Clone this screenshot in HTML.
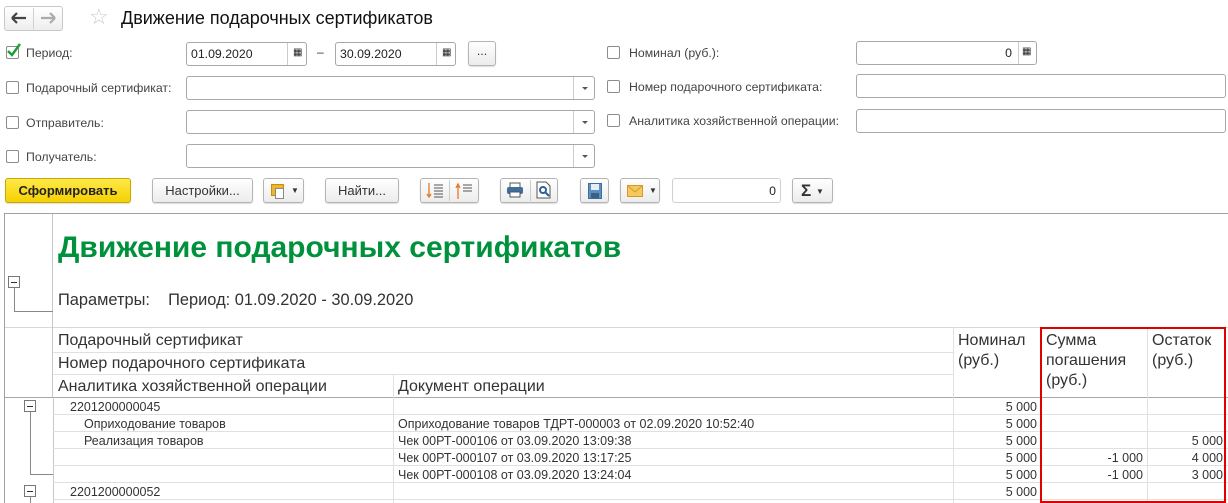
<!DOCTYPE html>
<html><head><meta charset="utf-8"><style>
*{box-sizing:border-box;margin:0;padding:0}
body{width:1228px;height:503px;overflow:hidden;background:#fff;font-family:"Liberation Sans",Arial,sans-serif;color:#333;position:relative}
.a{position:absolute}
.cb{position:absolute;width:13px;height:13px;border:1px solid #8c8c8c;border-radius:2px;background:#fff}
.lbl{position:absolute;font-size:12.3px;color:#444}
.inp{position:absolute;border:1px solid #a8a8a8;border-radius:3px;background:#fff;height:24px;font-size:12.3px;color:#222}
.dd{position:absolute;right:0;top:0;width:21px;height:100%;border-left:1px solid #ccc}
.dd:after{content:"";position:absolute;left:8px;top:10px;border:3px solid transparent;border-top:3px solid #555}
.btn{position:absolute;border:1px solid #b4b4b4;border-radius:3px;background:linear-gradient(#fff,#ececec);height:25px;font-size:12.3px;color:#333;text-align:center;line-height:23px;box-shadow:0 1px 1px #ddd}
.h{position:absolute;font-size:16px;color:#333}
.hl{position:absolute;height:1px;background:#e0e0e0}
.vl{position:absolute;width:1px;background:#e0e0e0}
.d{position:absolute;font-size:12.5px;color:#333}
.r{text-align:right}
.tog{position:absolute;width:12px;height:12px;border:1px solid #777;background:#fff}
.tog:after{content:"";position:absolute;left:2px;top:5px;width:6px;height:1px;background:#333}
</style></head><body>

<!-- nav -->
<div class="a" style="left:4px;top:6px;width:59px;height:25px;border:1px solid #c8c8c8;border-radius:3px;background:linear-gradient(#fff,#eee)"></div>
<div class="a" style="left:33px;top:8px;width:1px;height:21px;background:#d0d0d0"></div>
<svg class="a" style="left:11px;top:12px" width="16" height="12"><path d="M1 6H15M1 6L6 1M1 6L6 11" stroke="#444" stroke-width="2.2" fill="none"/></svg>
<svg class="a" style="left:40px;top:12px" width="16" height="12"><path d="M1 6H15M15 6L10 1M15 6L10 11" stroke="#aaa" stroke-width="2.2" fill="none"/></svg>
<div class="a" style="left:89px;top:4px;font-size:22px;color:#ccc">☆</div>
<div class="a" style="left:121px;top:8px;font-size:18px;color:#111">Движение подарочных сертификатов</div>

<!-- row1 -->
<div class="cb" style="left:6px;top:46px"></div>
<svg class="a" style="left:6px;top:42px" width="16" height="16"><path d="M2 9L6 13L14 2" stroke="#1e9e3c" stroke-width="2.5" fill="none"/></svg>
<div class="lbl" style="left:26px;top:46px">Период:</div>
<div class="inp" style="left:186px;top:42px;width:121px"><span class="a" style="left:4px;top:4px">01.09.2020</span><div class="a" style="left:100px;top:0;width:1px;height:22px;background:#ccc"></div><span class="a" style="left:106px;top:4px;font-size:10px">▦</span></div>
<div class="a" style="left:317px;top:45px;font-size:12px">–</div>
<div class="inp" style="left:335px;top:42px;width:121px"><span class="a" style="left:4px;top:4px">30.09.2020</span><div class="a" style="left:100px;top:0;width:1px;height:22px;background:#ccc"></div><span class="a" style="left:106px;top:4px;font-size:10px">▦</span></div>
<div class="btn" style="left:468px;top:41px;width:28px;line-height:18px">...</div>

<div class="cb" style="left:607px;top:46px"></div>
<div class="lbl" style="left:629px;top:46px">Номинал (руб.):</div>
<div class="inp" style="left:856px;top:41px;width:181px"><span class="a" style="right:24px;top:4px">0</span><div class="a" style="left:161px;top:0;width:1px;height:22px;background:#ccc"></div><span class="a" style="left:165px;top:4px;font-size:10px">▦</span></div>

<!-- row2 -->
<div class="cb" style="left:6px;top:81px"></div>
<div class="lbl" style="left:26px;top:81px">Подарочный сертификат:</div>
<div class="inp" style="left:186px;top:76px;width:409px"><div class="dd"></div></div>
<div class="cb" style="left:607px;top:80px"></div>
<div class="lbl" style="left:629px;top:80px">Номер подарочного сертификата:</div>
<div class="inp" style="left:856px;top:74px;width:370px"></div>

<!-- row3 -->
<div class="cb" style="left:6px;top:116px"></div>
<div class="lbl" style="left:26px;top:116px">Отправитель:</div>
<div class="inp" style="left:186px;top:110px;width:409px"><div class="dd"></div></div>
<div class="cb" style="left:607px;top:114px"></div>
<div class="lbl" style="left:629px;top:114px">Аналитика хозяйственной операции:</div>
<div class="inp" style="left:856px;top:109px;width:370px"></div>

<!-- row4 -->
<div class="cb" style="left:6px;top:150px"></div>
<div class="lbl" style="left:26px;top:150px">Получатель:</div>
<div class="inp" style="left:186px;top:144px;width:409px"><div class="dd"></div></div>

<!-- toolbar -->
<div class="btn" style="left:5px;top:178px;width:126px;background:linear-gradient(#ffe94a,#f5d000);border-color:#c9a900;font-weight:bold;color:#222;font-size:13px">Сформировать</div>
<div class="btn" style="left:152px;top:178px;width:101px;font-size:13px">Настройки...</div>
<div class="btn" style="left:263px;top:178px;width:41px"><span class="a" style="left:7px;top:5px;width:13px;height:12px;background:#e8b830;border:1px solid #c89000"></span><span class="a" style="left:11px;top:9px;width:9px;height:11px;background:#fff;border:1px solid #888"></span><span class="a" style="left:27px;top:0;font-size:8px">▼</span></div>
<div class="btn" style="left:325px;top:178px;width:74px;font-size:13px">Найти...</div>
<div class="btn" style="left:420px;top:178px;width:59px"></div>
<div class="a" style="left:449px;top:180px;width:1px;height:21px;background:#ccc"></div>
<svg class="a" style="left:426px;top:182px" width="20" height="18"><path d="M3 1V15M1 12L3 15L5 12" stroke="#e87722" stroke-width="1.3" fill="none"/><path d="M8 3H17M8 6H17M8 9H17M8 12H17M8 15H17" stroke="#555" stroke-width="1"/></svg>
<svg class="a" style="left:455px;top:182px" width="20" height="18"><path d="M3 17V3M1 6L3 2L5 6" stroke="#e87722" stroke-width="1.3" fill="none"/><path d="M8 3H17M8 6H17M8 9H17" stroke="#555" stroke-width="1"/></svg>
<div class="btn" style="left:500px;top:178px;width:58px"></div>
<div class="a" style="left:530px;top:180px;width:1px;height:21px;background:#ccc"></div>
<svg class="a" style="left:506px;top:182px" width="18" height="16"><rect x="4" y="1" width="10" height="5" fill="#fff" stroke="#555"/><rect x="1" y="5" width="16" height="7" rx="2" fill="#3d6f9e"/><rect x="4" y="10" width="10" height="5" fill="#fff" stroke="#555"/></svg>
<svg class="a" style="left:536px;top:181px" width="16" height="18"><path d="M1 1H10L14 5V17H1Z" fill="#fff" stroke="#555"/><circle cx="7" cy="9" r="3" fill="none" stroke="#2b5f9e" stroke-width="2"/><path d="M9 11L13 15" stroke="#2b5f9e" stroke-width="2"/></svg>
<div class="btn" style="left:580px;top:178px;width:29px"><svg class="a" style="left:7px;top:4px" width="14" height="16"><rect x="0.5" y="0.5" width="13" height="15" fill="#5d8fc0" stroke="#3d6f9e"/><rect x="3" y="1" width="8" height="6" fill="#e8eef5"/><rect x="3" y="10" width="8" height="5" fill="#3d6080"/></svg></div>
<div class="btn" style="left:620px;top:178px;width:40px"><svg class="a" style="left:6px;top:6px" width="16" height="12"><rect x="0.5" y="0.5" width="15" height="11" fill="#f5c860" stroke="#d49b20"/><path d="M1 1L8 7L15 1" stroke="#d49b20" fill="none"/></svg><span class="a" style="left:28px;top:0;font-size:8px">▼</span></div>
<div class="inp" style="left:672px;top:178px;width:109px;border-color:#d0d0d0;height:25px"><span class="a" style="right:4px;top:5px">0</span></div>
<div class="btn" style="left:792px;top:178px;width:41px;font-size:17px;font-weight:bold;text-align:left;padding-left:8px">Σ <span style="font-size:8px;font-weight:normal;vertical-align:middle">▼</span></div>

<!-- report frame -->
<div class="a" style="left:4px;top:213px;width:1224px;height:290px;border:1px solid #a0a0a0;border-right:none;border-bottom:none"></div>
<div class="vl" style="left:52px;top:214px;height:113px;background:#c8c8c8"></div>
<div class="tog" style="left:8px;top:276px"></div>
<div class="a" style="left:14px;top:288px;width:1px;height:23px;background:#888"></div>
<div class="a" style="left:14px;top:311px;width:39px;height:1px;background:#888"></div>
<div class="a" style="left:58px;top:231px;font-size:30px;font-weight:bold;color:#00913c">Движение подарочных сертификатов</div>
<div class="a" style="left:58px;top:291px;font-size:16.4px;color:#333">Параметры:&nbsp;&nbsp;&nbsp; Период: 01.09.2020 - 30.09.2020</div>

<!-- table grid -->
<div class="hl" style="left:5px;top:327px;width:1223px;background:#d8d8d8"></div>
<div class="vl" style="left:52px;top:327px;height:70px;background:#c8c8c8"></div>
<div class="hl" style="left:53px;top:352px;width:900px"></div>
<div class="hl" style="left:53px;top:374px;width:900px"></div>
<div class="hl" style="left:5px;top:397px;width:1223px;background:#a8a8a8"></div>
<div class="vl" style="left:393px;top:374px;height:129px"></div>
<div class="vl" style="left:953px;top:327px;height:176px"></div>
<div class="vl" style="left:1147px;top:327px;height:176px"></div>
<div class="vl" style="left:53px;top:397px;height:106px;background:#c8c8c8"></div>
<div class="hl" style="left:53px;top:414px;width:1175px"></div>
<div class="hl" style="left:53px;top:431px;width:1175px"></div>
<div class="hl" style="left:53px;top:448px;width:1175px"></div>
<div class="hl" style="left:53px;top:465px;width:1175px"></div>
<div class="hl" style="left:53px;top:482px;width:1175px"></div>
<div class="hl" style="left:53px;top:499px;width:1175px"></div>

<div class="h" style="left:58px;top:332px">Подарочный сертификат</div>
<div class="h" style="left:58px;top:355px">Номер подарочного сертификата</div>
<div class="h" style="left:58px;top:378px">Аналитика хозяйственной операции</div>
<div class="h" style="left:398px;top:378px">Документ операции</div>
<div class="h" style="left:958px;top:331px;line-height:20px">Номинал<br>(руб.)</div>
<div class="h" style="left:1046px;top:331px;line-height:20px">Сумма<br>погашения<br>(руб.)</div>
<div class="h" style="left:1152px;top:331px;line-height:20px">Остаток<br>(руб.)</div>

<!-- tree -->
<div class="tog" style="left:24px;top:400px"></div>
<div class="a" style="left:30px;top:412px;width:1px;height:62px;background:#888"></div>
<div class="a" style="left:30px;top:474px;width:23px;height:1px;background:#888"></div>
<div class="tog" style="left:24px;top:485px"></div>
<div class="a" style="left:30px;top:497px;width:1px;height:6px;background:#888"></div>

<div class="d" style="left:70px;top:400px">2201200000045</div>
<div class="d" style="left:84px;top:417px">Оприходование товаров</div>
<div class="d" style="left:84px;top:434px">Реализация товаров</div>
<div class="d" style="left:70px;top:485px">2201200000052</div>
<div class="d" style="left:398px;top:417px">Оприходование товаров ТДРТ-000003 от 02.09.2020 10:52:40</div>
<div class="d" style="left:398px;top:434px">Чек 00РТ-000106 от 03.09.2020 13:09:38</div>
<div class="d" style="left:398px;top:451px">Чек 00РТ-000107 от 03.09.2020 13:17:25</div>
<div class="d" style="left:398px;top:468px">Чек 00РТ-000108 от 03.09.2020 13:24:04</div>

<div class="d r" style="left:954px;width:83px;top:400px">5 000</div>
<div class="d r" style="left:954px;width:83px;top:417px">5 000</div>
<div class="d r" style="left:954px;width:83px;top:434px">5 000</div>
<div class="d r" style="left:954px;width:83px;top:451px">5 000</div>
<div class="d r" style="left:954px;width:83px;top:468px">5 000</div>
<div class="d r" style="left:954px;width:83px;top:485px">5 000</div>
<div class="d r" style="left:1042px;width:101px;top:451px">-1 000</div>
<div class="d r" style="left:1042px;width:101px;top:468px">-1 000</div>
<div class="d r" style="left:1148px;width:75px;top:434px">5 000</div>
<div class="d r" style="left:1148px;width:75px;top:451px">4 000</div>
<div class="d r" style="left:1148px;width:75px;top:468px">3 000</div>

<div class="a" style="left:1040px;top:327px;width:186px;height:176px;border:2px solid #e00000"></div>
</body></html>
